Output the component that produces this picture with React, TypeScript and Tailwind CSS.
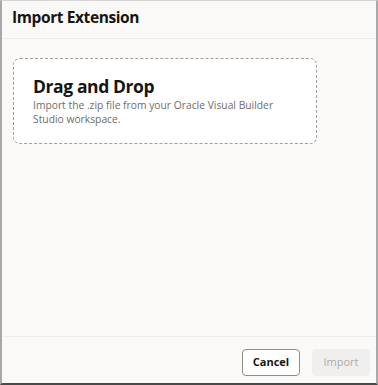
import React from 'react';

function App() {
    return (
        <div
            className="w-[378px] h-[385px] flex flex-col bg-[#fbf9f8] border-t border-t-[#d4d4d4] border-l-2 border-l-[#a8a8a8] border-r-2 border-r-[#a9a9a9] border-b-2 border-b-[#4a4a4a] text-[#161513]"
            style={{ fontFamily: '"Open Sans", "Noto Sans", sans-serif' }}
        >
            {/* header */}
            <div className="h-[38px] px-[10px] pt-[5px] border-b border-[#f0eeeb]">
                <h1 className="text-[15.5px] leading-[22px] font-bold tracking-[-0.4px]">Import Extension</h1>
            </div>

            {/* body */}
            <div className="flex-1 px-[11px] pt-[19px]">
                <div className="w-[304px] h-[86px] rounded-[7px] border border-dashed border-[#9e9e9e] bg-white px-[19px] pt-[16px]">
                    <h2 className="text-[17.5px] font-bold leading-[22px] tracking-[-0.4px]">Drag and Drop</h2>
                    <p className="text-[10.3px] leading-[14px] text-[#6f6c69] mt-[1px] pr-2">
                        Import the .zip file from your Oracle Visual Builder Studio workspace.
                    </p>
                </div>
            </div>

            {/* footer */}
            <div className="h-[47px] border-t border-[#f0eeeb] flex items-start justify-end gap-[12px] pr-[6px] pt-[12px]">
                <button className="h-[27px] w-[58px] rounded-[4px] border border-[#8f8c89] bg-white text-[11px] font-bold text-[#161513]">
                    Cancel
                </button>
                <button className="h-[27px] w-[58px] rounded-[4px] bg-[#f1efed] text-[11px] text-[#aeaaa6]">
                    Import
                </button>
            </div>
        </div>
    );
}

export default App;
